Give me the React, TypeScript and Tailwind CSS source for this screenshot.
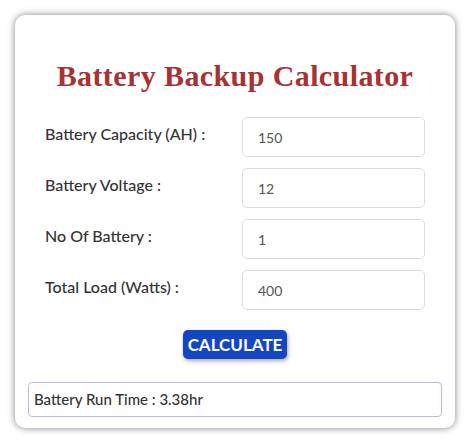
const fields = [
  { label: 'Battery Capacity (AH) :', value: '150' },
  { label: 'Battery Voltage :', value: '12' },
  { label: 'No Of Battery :', value: '1' },
  { label: 'Total Load (Watts) :', value: '400' },
];

export default function App() {
  return (
    <div className="w-[474px] h-[444px] bg-white pt-[15px] pl-[15px]" style={{ fontFamily: 'Lato, "Open Sans", sans-serif' }}>
      <div className="w-[440px] h-[413px] bg-white rounded-[10px] shadow-[0_0_7px_rgba(0,0,0,0.5)] pt-[44px] px-[13px]">
        <h1 className="text-center text-[30px] leading-[33px] font-bold tracking-[0.4px] text-[#a83232]" style={{ fontFamily: '"Liberation Serif", serif' }}>
          Battery Backup Calculator
        </h1>

        <div className="mt-[25px] px-[17px] flex flex-col gap-[11px]">
          {fields.map((f) => (
            <div key={f.label} className="flex items-center">
              <label className="w-[197px] text-[16px] font-medium text-[#333] -mt-[6px]">{f.label}</label>
              <input
                readOnly
                value={f.value}
                className="w-[183px] h-[40px] px-[15px] border border-[#ddd] rounded-[5px] text-[14px] text-[#555] outline-none"
              />
            </div>
          ))}
        </div>

        <div className="flex justify-center mt-[20px]">
          <button className="w-[104px] h-[29px] bg-[#1546c2] text-white text-[17px] font-bold rounded-[5px] shadow-[1px_2px_4px_rgba(0,0,0,0.35)]">
            CALCULATE
          </button>
        </div>

        <div className="mt-[23px] h-[35px] border-[1.5px] border-[#b5c0d8] rounded-[4px] px-[5px] flex items-center text-[15px] font-medium text-[#333]">
          Battery Run Time : 3.38hr
        </div>
      </div>
    </div>
  );
}
